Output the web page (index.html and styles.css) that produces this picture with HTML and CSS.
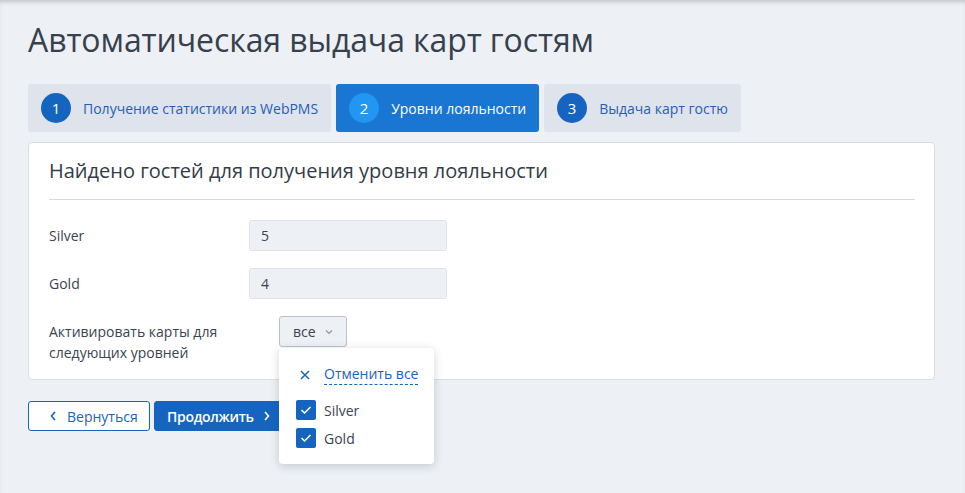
FILE: index.html
```html
<!DOCTYPE html>
<html lang="ru">
<head>
<meta charset="utf-8">
<title>Автоматическая выдача карт гостям</title>
<link rel="stylesheet" href="styles.css">
</head>
<body>
<div class="page">
  <h1 class="title">Автоматическая выдача карт гостям</h1>
  <div class="steps">
    <div class="step"><span class="step-num">1</span><span class="step-text">Получение статистики из WebPMS</span></div>
    <div class="step active"><span class="step-num">2</span><span class="step-text">Уровни лояльности</span></div>
    <div class="step"><span class="step-num">3</span><span class="step-text">Выдача карт гостю</span></div>
  </div>
  <div class="card">
    <h2 class="card-title">Найдено гостей для получения уровня лояльности</h2>
    <div class="row">
      <div class="label">Silver</div>
      <div class="field">5</div>
    </div>
    <div class="row">
      <div class="label">Gold</div>
      <div class="field">4</div>
    </div>
    <div class="row">
      <div class="label label-wide">Активировать карты для следующих уровней</div>
      <div class="select-wrap">
        <div class="select">все
          <svg class="select-chev" width="8" height="6" viewBox="0 0 8 6"><path d="M1 1.5 L4 4.5 L7 1.5" fill="none" stroke="#8c98a8" stroke-width="1.2"/></svg>
        </div>
        <div class="dropdown">
          <div class="dd-clear">
            <svg class="dd-x" width="10" height="10" viewBox="0 0 10 10"><path d="M1 1 L9 9 M9 1 L1 9" stroke="#1565c0" stroke-width="1.5"/></svg>
            <span class="dd-link">Отменить все</span>
          </div>
          <div class="dd-item"><span class="check"><svg width="12" height="10" viewBox="0 0 12 10"><path d="M1.5 5 L4.5 8 L10.5 2" fill="none" stroke="#fff" stroke-width="1.5"/></svg></span>Silver</div>
          <div class="dd-item"><span class="check"><svg width="12" height="10" viewBox="0 0 12 10"><path d="M1.5 5 L4.5 8 L10.5 2" fill="none" stroke="#fff" stroke-width="1.5"/></svg></span>Gold</div>
        </div>
      </div>
    </div>
  </div>
  <div class="actions">
    <button class="btn btn-back"><svg width="6" height="10" viewBox="0 0 6 10"><path d="M5 1 L1.5 5 L5 9" fill="none" stroke="#1565c0" stroke-width="1.6"/></svg>Вернуться</button>
    <button class="btn btn-next">Продолжить<svg width="6" height="10" viewBox="0 0 6 10"><path d="M1 1 L4.5 5 L1 9" fill="none" stroke="#fff" stroke-width="1.6"/></svg></button>
  </div>
</div>
</body>
</html>
```
FILE: styles.css
```css
* { box-sizing: border-box; }
html, body { margin: 0; height: 100%; }
body {
  background: #edf0f4;
  font-family: "Open Sans", "Noto Sans", sans-serif;
  color: #3a4350;
}
.page {
  min-height: 100%;
  padding: 20px 30px 0 28px;
  box-shadow: inset 0 4px 4px -2px rgba(0, 0, 0, 0.18);
}
.title {
  margin: 0 0 24px;
  font-size: 32px;
  line-height: 40px;
  font-weight: 400;
  color: #37404d;
  letter-spacing: -0.1px;
}
.steps {
  display: flex;
  gap: 5px;
}
.step {
  display: flex;
  align-items: center;
  gap: 12px;
  height: 48px;
  padding: 0 13px;
  background: #dfe3eb;
  border-radius: 3px;
  font-size: 14px;
  color: #1f5fb8;
}
.step-num {
  width: 30px;
  height: 30px;
  border-radius: 50%;
  background: #1565c0;
  color: #fff;
  display: flex;
  align-items: center;
  justify-content: center;
  font-size: 15px;
}
.step.active {
  background: #1976d2;
  color: #fff;
}
.step.active .step-num { background: #2196f3; }
.card {
  margin-top: 10px;
  background: #fff;
  border: 1px solid #d8dde5;
  border-radius: 4px;
  padding: 14px 19px 16px 20px;
}
.card-title {
  margin: 0 0 20px;
  padding-bottom: 14px;
  border-bottom: 1px solid #d3d9e1;
  font-size: 20px;
  line-height: 28px;
  font-weight: 400;
  color: #333c48;
}
.row {
  display: flex;
  align-items: flex-start;
  margin-bottom: 17px;
}
.row:last-child { margin-bottom: 0; }
.label {
  width: 200px;
  padding-top: 5px;
  font-size: 14px;
  line-height: 21px;
}
.label-wide { width: 230px; padding-right: 50px; }
.field {
  width: 198px;
  height: 31px;
  background: #edf0f4;
  border: 1px solid #dde2e9;
  border-radius: 3px;
  padding: 0 11px;
  font-size: 14px;
  line-height: 29px;
  color: #3a4350;
}
.select-wrap { position: relative; }
.select {
  display: flex;
  align-items: center;
  gap: 9px;
  width: 68px;
  height: 31px;
  padding: 0 13px;
  background: #edf0f4;
  border: 1px solid #b8c2ce;
  border-radius: 3px;
  font-size: 14px;
  color: #3a4350;
}
.select-chev { margin-top: 1px; }
.dropdown {
  position: absolute;
  top: 32px;
  left: 0;
  width: 155px;
  height: 116px;
  background: #fff;
  border-radius: 4px;
  box-shadow: 0 2px 10px rgba(30, 45, 70, 0.2);
  padding: 16px 8px 0 17px;
  z-index: 5;
  white-space: nowrap;
}
.dd-clear {
  display: flex;
  align-items: center;
  gap: 14px;
  margin-bottom: 11px;
  padding-left: 4px;
}
.dd-link {
  font-size: 14px;
  line-height: 20px;
  color: #1565c0;
  border-bottom: 1px dashed #1565c0;
}
.dd-item {
  display: flex;
  align-items: center;
  gap: 8px;
  height: 28px;
  font-size: 14px;
  color: #3a4350;
}
.check {
  width: 20px;
  height: 20px;
  border-radius: 2px;
  background: #1565c0;
  display: flex;
  align-items: center;
  justify-content: center;
}
.actions {
  display: flex;
  gap: 4px;
  margin-top: 21px;
}
.btn {
  display: flex;
  align-items: center;
  height: 30px;
  font-family: inherit;
  font-size: 14px;
  border-radius: 3px;
  cursor: pointer;
  white-space: nowrap;
}
.btn-back {
  width: 122px;
  padding: 0 0 0 21px;
  gap: 11px;
  background: #fff;
  border: 1px solid #1565c0;
  color: #1565c0;
}
.btn-next {
  padding: 0 14px 0 12px;
  gap: 10px;
  background: #1565c0;
  border: 1px solid #1565c0;
  color: #fff;
  font-weight: 600;
  letter-spacing: -0.3px;
}
```
